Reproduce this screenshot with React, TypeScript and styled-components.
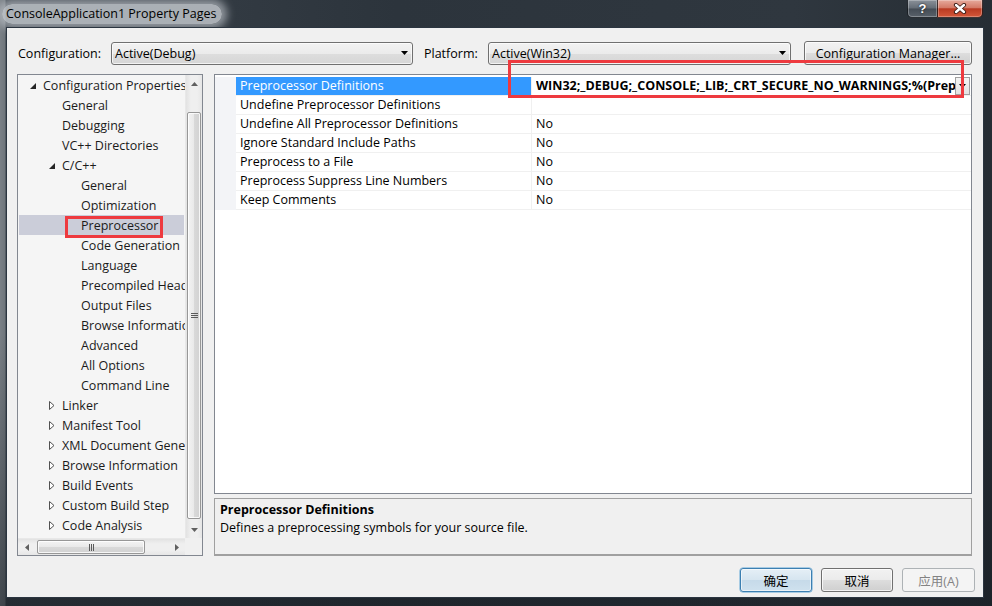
import React from 'react';
import styled, { createGlobalStyle, css } from 'styled-components';

const GlobalStyle = createGlobalStyle`
  html, body { margin: 0; padding: 0; background: #1e252c; }
  body {
    font-family: "Open Sans", "Noto Sans CJK SC", sans-serif;
    font-size: 12.5px;
    color: #000;
  }
  * { box-sizing: border-box; }
`;

const Window = styled.div`
  width: 992px;
  height: 606px;
  display: flex;
  flex-direction: column;
  overflow: hidden;
  background:
    linear-gradient(to bottom, rgba(0,0,0,0) 0, rgba(0,0,0,0) 55%, rgba(20,26,32,0.55) 100%),
    linear-gradient(to right, #7a8086 0, #6f767c 5px, #3a424a 6px, #2c343c 40%, #2f373f 80%, #262d34 100%);
`;

const TitleBar = styled.div`
  height: 27px;
  flex: none;
  display: flex;
  justify-content: space-between;
  align-items: flex-start;
  padding-left: 2px;
`;

const TitleText = styled.div`
  margin-top: 4px;
  padding: 0 6px 0 4px;
  height: 20px;
  line-height: 20px;
  font-size: 12.5px;
  color: #000;
  border-radius: 10px;
  background: rgba(200, 205, 210, 0.8);
  box-shadow: 0 0 8px 5px rgba(200, 205, 210, 0.65);
`;

const CaptionGroup = styled.div`
  display: flex;
  margin-right: 9px;
`;

const CaptionButton = styled.div<{ $kind: 'help' | 'close' }>`
  height: 18px;
  display: flex;
  align-items: center;
  justify-content: center;
  border: 1px solid rgba(10, 14, 18, 0.75);
  border-top: none;
  box-shadow: inset 0 0 0 1px rgba(255, 255, 255, 0.28);
  color: #fff;
  font-weight: bold;
  font-family: "Liberation Sans", sans-serif;
  font-size: 13px;
  ${(p) =>
    p.$kind === 'help'
      ? css`
          width: 30px;
          border-radius: 0 0 0 5px;
          border-right: none;
          background: linear-gradient(#8a9199, #646c75 48%, #444c55 52%, #59616a);
          text-shadow: 0 0 2px #000;
        `
      : css`
          width: 46px;
          border-radius: 0 0 5px 0;
          background: linear-gradient(#e6aa9c, #d47a67 45%, #b93a22 52%, #d4583a);
        `}
`;

const Client = styled.div`
  flex: 1;
  margin: 0 8px 8px 6px;
  background: #f0f0f0;
  border: 1px solid #2b3540;
  padding: 13px 11px 5px 10px;
  display: flex;
  flex-direction: column;
  position: relative;
`;

const Toolbar = styled.div`
  height: 24px;
  display: flex;
  align-items: center;
`;

const FieldLabel = styled.div<{ $w: number; $pl: number }>`
  width: ${(p) => p.$w}px;
  padding-left: ${(p) => p.$pl}px;
  flex: none;
  white-space: nowrap;
`;

const Combo = styled.div<{ $w: number }>`
  width: ${(p) => p.$w}px;
  height: 23px;
  flex: none;
  border: 1px solid #707070;
  border-radius: 3px;
  background: linear-gradient(#f2f2f2, #ebebeb 50%, #dddddd 51%, #d6d6d6);
  box-shadow: inset 0 0 0 1px rgba(255, 255, 255, 0.7);
  display: flex;
  align-items: center;
  justify-content: space-between;
  padding: 0 4px 0 3px;
`;

const Caret = () => (
  <svg width="7" height="4" viewBox="0 0 7 4">
    <polygon points="0,0 7,0 3.5,4" fill="#000" />
  </svg>
);

const PushButton = styled.div<{ $w: number; $variant?: 'default' | 'disabled' }>`
  width: ${(p) => p.$w}px;
  height: 24px;
  flex: none;
  display: flex;
  align-items: center;
  justify-content: center;
  border-radius: 3px;
  white-space: nowrap;
  font-family: "Open Sans", "Noto Sans CJK SC", sans-serif;
  border: 1px solid #707070;
  background: linear-gradient(#f2f2f2, #ebebeb 50%, #dddddd 51%, #cfcfcf);
  box-shadow: inset 0 0 0 1px rgba(255, 255, 255, 0.75);
  color: #000;
  ${(p) =>
    p.$variant === 'default' &&
    css`
      border-color: #3c7fb1;
      background: linear-gradient(#e5eff6, #d6e5f0 50%, #c6dae9 51%, #cfe1ee);
      box-shadow: inset 0 0 0 1px rgba(255, 255, 255, 0.55), 0 0 0 0.5px #5ea6d6;
    `}
  ${(p) =>
    p.$variant === 'disabled' &&
    css`
      border-color: #adb2b5;
      background: #f4f4f4;
      box-shadow: none;
      color: #838383;
    `}
`;

const Main = styled.div`
  margin-top: 9px;
  height: 482px;
  flex: none;
  display: grid;
  grid-template-columns: 186px 1fr;
  column-gap: 11px;
`;

/* ---------- tree ---------- */

const TreePanel = styled.div`
  border: 1px solid #828790;
  background: #f5f5f5;
  display: grid;
  grid-template-columns: 1fr 17px;
  grid-template-rows: 1fr 17px;
  overflow: hidden;
`;

const TreeViewport = styled.div`
  overflow: hidden;
  position: relative;
`;

const TreeRow = styled.div<{ $level: number; $selected?: boolean }>`
  height: 20px;
  margin: 0 1px;
  display: flex;
  align-items: center;
  padding-left: ${(p) => 5 + p.$level * 19}px;
  white-space: nowrap;
  position: relative;
  color: #1b1b1b;
  background: ${(p) => (p.$selected ? '#cbcdd9' : 'transparent')};
`;

const Expander = styled.span`
  width: 19px;
  flex: none;
  display: flex;
  align-items: center;
  padding-left: 6px;
`;

const TreeText = styled.span`
  flex: none;
`;

const Annotation = styled.div<{ $l: number; $t: number; $w: number; $h: number }>`
  position: absolute;
  left: ${(p) => p.$l}px;
  top: ${(p) => p.$t}px;
  width: ${(p) => p.$w}px;
  height: ${(p) => p.$h}px;
  border: 3px solid #ee3a3f;
  z-index: 5;
  pointer-events: none;
`;

const OpenGlyph = () => (
  <svg width="6" height="6" viewBox="0 0 6 6" style={{ marginTop: 1 }}>
    <polygon points="6,0 6,6 0,6" fill="#262626" />
  </svg>
);

const ClosedGlyph = () => (
  <svg width="6" height="9" viewBox="0 0 6 9">
    <polygon points="0.5,0.5 5,4.5 0.5,8.5" fill="#fff" stroke="#505050" strokeWidth="1" />
  </svg>
);

const VScroll = styled.div`
  display: flex;
  flex-direction: column;
  background: linear-gradient(to right, #e2e2e2, #efefef 30%, #efefef 70%, #e6e6e6);
  border-left: 1px solid #e8e8e8;
`;

const HScroll = styled.div`
  display: flex;
  align-items: stretch;
  background: linear-gradient(#e2e2e2, #efefef 30%, #efefef 70%, #e6e6e6);
  border-top: 1px solid #e8e8e8;
`;

const ScrollArrow = styled.div`
  width: 17px;
  height: 17px;
  flex: none;
  display: flex;
  align-items: center;
  justify-content: center;
`;

const Thumb = styled.div<{ $vertical?: boolean; $size: number; $offset: number }>`
  flex: none;
  border: 1px solid #979797;
  border-radius: 2px;
  display: flex;
  align-items: center;
  justify-content: center;
  box-shadow: inset 0 0 0 1px rgba(255, 255, 255, 0.8);
  ${(p) =>
    p.$vertical
      ? css`
          height: ${p.$size}px;
          margin: ${p.$offset}px 1px 0 1px;
          background: linear-gradient(to right, #f3f3f3, #e9e9e9 50%, #d9d9d9 51%, #d2d2d2);
        `
      : css`
          width: ${p.$size}px;
          margin: 1px 0 1px ${p.$offset}px;
          background: linear-gradient(#f3f3f3, #e9e9e9 50%, #d9d9d9 51%, #d2d2d2);
        `}
`;

const Grip = ({ vertical }: { vertical?: boolean }) =>
  vertical ? (
    <svg width="7" height="7" viewBox="0 0 7 7">
      <path d="M0 1.5H7M0 3.5H7M0 5.5H7" stroke="#5a5a5a" strokeWidth="1" />
    </svg>
  ) : (
    <svg width="7" height="7" viewBox="0 0 7 7">
      <path d="M1.5 0V7M3.5 0V7M5.5 0V7" stroke="#5a5a5a" strokeWidth="1" />
    </svg>
  );

const Spacer = styled.div`
  flex: 1;
`;

const Corner = styled.div`
  background: #f0f0f0;
`;

const Tri = ({ dir }: { dir: 'up' | 'down' | 'left' | 'right' }) => {
  const pts =
    dir === 'up'
      ? '0,4 7,4 3.5,0'
      : dir === 'down'
      ? '0,0 7,0 3.5,4'
      : dir === 'left'
      ? '4,0 4,7 0,3.5'
      : '0,0 0,7 4,3.5';
  const vertical = dir === 'up' || dir === 'down';
  return (
    <svg width={vertical ? 7 : 4} height={vertical ? 4 : 7} viewBox={vertical ? '0 0 7 4' : '0 0 4 7'}>
      <polygon points={pts} fill="#606060" />
    </svg>
  );
};

/* ---------- grid ---------- */

const RightColumn = styled.div`
  display: grid;
  grid-template-rows: 420px 58px;
  row-gap: 4px;
`;

const GridPanel = styled.div`
  border: 1px solid #828790;
  background: #fff;
  padding-top: 2px;
  overflow: hidden;
`;

const PropRow = styled.div`
  height: 19px;
  display: grid;
  grid-template-columns: 21px 296px 1fr;
`;

const Gutter = styled.div`
  background: #f3f4f7;
`;

const NameCell = styled.div<{ $selected?: boolean }>`
  padding-left: 4px;
  line-height: 18px;
  white-space: nowrap;
  overflow: hidden;
  border-bottom: 1px solid #f0f0f0;
  border-right: 1px solid #f0f0f0;
  ${(p) =>
    p.$selected &&
    css`
      background: #3399ff;
      color: #fff;
    `}
`;

const ValueCell = styled.div<{ $selected?: boolean }>`
  display: flex;
  align-items: center;
  min-width: 0;
  padding-left: 4px;
  border-bottom: 1px solid #f0f0f0;
  font-weight: ${(p) => (p.$selected ? 700 : 400)};
`;

const ValueText = styled.span`
  flex: 1;
  min-width: 0;
  overflow: hidden;
  white-space: nowrap;
  line-height: 18px;
`;

const DropButton = styled.div`
  width: 15px;
  height: 18px;
  flex: none;
  margin-right: 1px;
  border: 1px solid #a0a0a0;
  background: linear-gradient(#f4f4f4, #e2e2e2);
  display: flex;
  align-items: center;
  justify-content: center;
`;

const DescPanel = styled.div`
  border: 1px solid #a0a0a0;
  border-bottom: 2px solid #a0a0a0;
  background: #f0f0f0;
  padding: 2px 5px 0 5px;
  line-height: 18px;
`;

const DescTitle = styled.div`
  font-weight: 700;
`;

const Footer = styled.div`
  margin-top: 12px;
  margin-right: -3px;
  display: flex;
  justify-content: flex-end;
  gap: 9px;
`;

type TreeItem = { label: string; level: number; exp?: 'open' | 'closed'; selected?: boolean };

const treeItems: TreeItem[] = [
  { label: 'Configuration Properties', level: 0, exp: 'open' },
  { label: 'General', level: 1 },
  { label: 'Debugging', level: 1 },
  { label: 'VC++ Directories', level: 1 },
  { label: 'C/C++', level: 1, exp: 'open' },
  { label: 'General', level: 2 },
  { label: 'Optimization', level: 2 },
  { label: 'Preprocessor', level: 2, selected: true },
  { label: 'Code Generation', level: 2 },
  { label: 'Language', level: 2 },
  { label: 'Precompiled Headers', level: 2 },
  { label: 'Output Files', level: 2 },
  { label: 'Browse Information', level: 2 },
  { label: 'Advanced', level: 2 },
  { label: 'All Options', level: 2 },
  { label: 'Command Line', level: 2 },
  { label: 'Linker', level: 1, exp: 'closed' },
  { label: 'Manifest Tool', level: 1, exp: 'closed' },
  { label: 'XML Document Generator', level: 1, exp: 'closed' },
  { label: 'Browse Information', level: 1, exp: 'closed' },
  { label: 'Build Events', level: 1, exp: 'closed' },
  { label: 'Custom Build Step', level: 1, exp: 'closed' },
  { label: 'Code Analysis', level: 1, exp: 'closed' },
];

const props: [string, string][] = [
  ['Preprocessor Definitions', 'WIN32;_DEBUG;_CONSOLE;_LIB;_CRT_SECURE_NO_WARNINGS;%(PreprocessorDefinitions)'],
  ['Undefine Preprocessor Definitions', ''],
  ['Undefine All Preprocessor Definitions', 'No'],
  ['Ignore Standard Include Paths', 'No'],
  ['Preprocess to a File', 'No'],
  ['Preprocess Suppress Line Numbers', 'No'],
  ['Keep Comments', 'No'],
];

const CloseGlyph = () => (
  <svg width="14" height="11" viewBox="0 0 14 11">
    <path d="M3 2 L11 9 M11 2 L3 9" stroke="#3a1a14" strokeWidth="4.2" strokeLinecap="round" />
    <path d="M3 2 L11 9 M11 2 L3 9" stroke="#fff" strokeWidth="2.4" strokeLinecap="round" />
  </svg>
);

export default function App() {
  return (
    <>
      <GlobalStyle />
      <Window>
        <TitleBar>
          <TitleText>ConsoleApplication1 Property Pages</TitleText>
          <CaptionGroup>
            <CaptionButton $kind="help">?</CaptionButton>
            <CaptionButton $kind="close">
              <CloseGlyph />
            </CaptionButton>
          </CaptionGroup>
        </TitleBar>
        <Client>
          <Toolbar>
            <FieldLabel $w={94} $pl={1}>Configuration:</FieldLabel>
            <Combo $w={302}>
              <span>Active(Debug)</span>
              <Caret />
            </Combo>
            <FieldLabel $w={75} $pl={11}>Platform:</FieldLabel>
            <Combo $w={303}>
              <span>Active(Win32)</span>
              <Caret />
            </Combo>
            <Spacer />
            <PushButton $w={168}>Configuration Manager...</PushButton>
          </Toolbar>
          <Main>
            <TreePanel>
              <TreeViewport>
                {treeItems.map((it, i) => (
                  <TreeRow key={i} $level={it.level} $selected={it.selected}>
                    <Expander>
                      {it.exp === 'open' && <OpenGlyph />}
                      {it.exp === 'closed' && <ClosedGlyph />}
                    </Expander>
                    <TreeText>{it.label}</TreeText>
                    {it.selected && <Annotation $l={46} $t={1} $w={98} $h={22} />}
                  </TreeRow>
                ))}
              </TreeViewport>
              <VScroll>
                <ScrollArrow>
                  <Tri dir="up" />
                </ScrollArrow>
                <Thumb $vertical $size={407} $offset={20}>
                  <Grip vertical />
                </Thumb>
                <Spacer />
                <ScrollArrow>
                  <Tri dir="down" />
                </ScrollArrow>
              </VScroll>
              <HScroll>
                <ScrollArrow>
                  <Tri dir="left" />
                </ScrollArrow>
                <Thumb $size={108} $offset={2}>
                  <Grip />
                </Thumb>
                <Spacer />
                <ScrollArrow>
                  <Tri dir="right" />
                </ScrollArrow>
              </HScroll>
              <Corner />
            </TreePanel>
            <RightColumn>
              <GridPanel>
                {props.map(([name, value], i) => (
                  <PropRow key={i}>
                    <Gutter />
                    <NameCell $selected={i === 0}>{name}</NameCell>
                    <ValueCell $selected={i === 0}>
                      <ValueText>{value}</ValueText>
                      {i === 0 && (
                        <DropButton>
                          <Caret />
                        </DropButton>
                      )}
                    </ValueCell>
                  </PropRow>
                ))}
              </GridPanel>
              <DescPanel>
                <DescTitle>Preprocessor Definitions</DescTitle>
                <div>Defines a preprocessing symbols for your source file.</div>
              </DescPanel>
            </RightColumn>
          </Main>
          <Footer>
            <PushButton $w={72} $variant="default">确定</PushButton>
            <PushButton $w={72}>取消</PushButton>
            <PushButton $w={73} $variant="disabled">应用(A)</PushButton>
          </Footer>
          <Annotation $l={501} $t={32} $w={456} $h={38} />
        </Client>
      </Window>
    </>
  );
}
